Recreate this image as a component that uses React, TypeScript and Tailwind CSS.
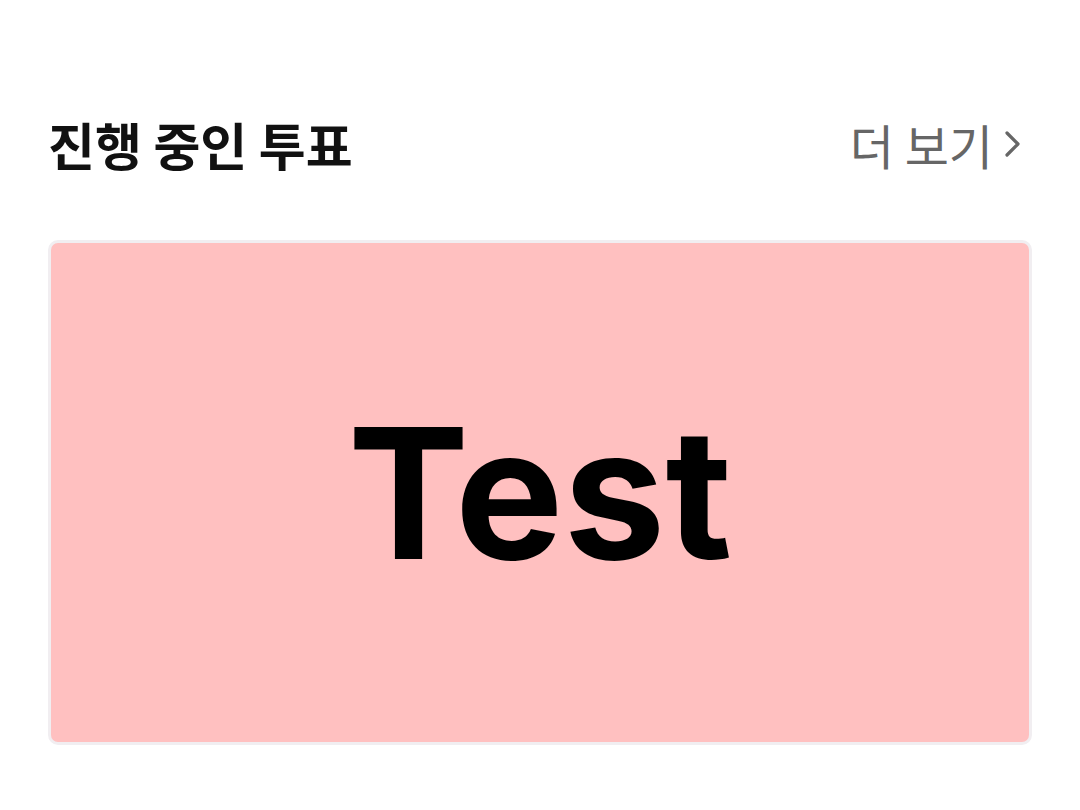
export default function App() {
  return (
    <div className="w-[1080px] h-[810px] bg-white px-12 pt-[106px]" style={{ fontFamily: '"Noto Sans CJK KR", "Noto Sans", sans-serif' }}>
      <div className="flex items-center justify-between h-[76px]">
        <h2 className="text-[51px] font-bold text-[#111]">진행 중인 투표</h2>
        <button className="flex items-center gap-[11px] text-[48px] text-[#666] pr-[10px]">
          <span>더 보기</span>
          <svg width="18" height="32" viewBox="0 0 18 32" fill="none" stroke="#666" strokeWidth="3.2" strokeLinecap="round" strokeLinejoin="round">
            <path d="M3 5l11 11-11 11" />
          </svg>
        </button>
      </div>
      <div className="mt-[58px] h-[505px] rounded-[10px] border-[3px] border-[#f1eef1] bg-[#ffc0c0] flex items-center justify-center">
        <span className="text-[182px] font-bold text-black leading-none" style={{ fontFamily: 'Inter, Roboto, "Liberation Sans", sans-serif' }}>Test</span>
      </div>
    </div>
  );
}
